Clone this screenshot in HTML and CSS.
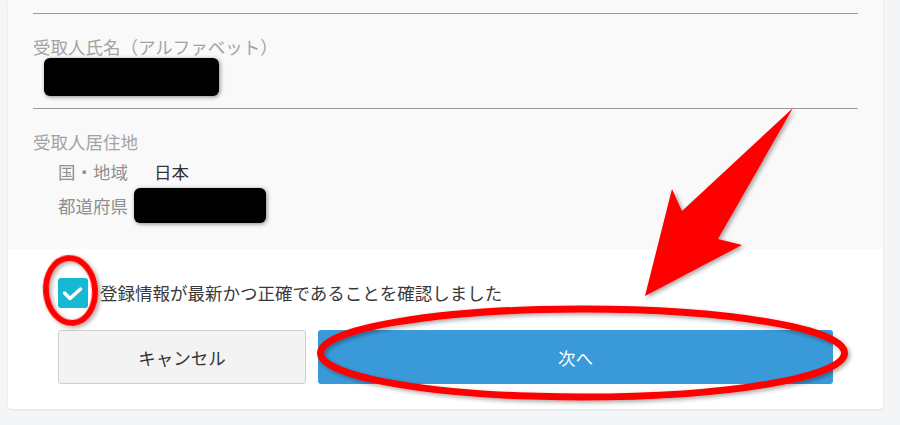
FILE: index.html
```html
<!DOCTYPE html>
<html lang="ja">
<head>
<meta charset="utf-8">
<title>確認</title>
<link rel="stylesheet" href="styles.css">
</head>
<body>
<div class="card">
  <div class="info">
    <div class="field">
      <div class="label">受取人氏名（アルファベット）</div>
      <div class="redact redact-name"></div>
    </div>
    <div class="field field-last">
      <div class="label">受取人居住地</div>
      <div class="row">
        <span class="key">国・地域</span><span class="val val-country">日本</span>
      </div>
      <div class="row row-pref">
        <span class="key">都道府県</span><span class="redact redact-pref"></span>
      </div>
    </div>
  </div>
  <div class="actions">
    <label class="check">
      <span class="box">
        <svg viewBox="0 0 30 30" width="30" height="30"><path d="M6.5 15 L12 20.5 L22.5 11" fill="none" stroke="#fff" stroke-width="3.5" stroke-linecap="round" stroke-linejoin="round"/></svg>
      </span>
      <span class="check-text">登録情報が最新かつ正確であることを確認しました</span>
    </label>
    <div class="buttons">
      <button class="btn btn-cancel">キャンセル</button>
      <button class="btn btn-next">次へ</button>
    </div>
  </div>
</div>
<svg class="overlay" width="900" height="425" viewBox="0 0 900 425">
  <defs>
    <filter id="sh" x="-20%" y="-20%" width="140%" height="140%">
      <feDropShadow dx="2" dy="2" stdDeviation="2" flood-color="#000" flood-opacity="0.35"/>
    </filter>
  </defs>
  <ellipse cx="70.5" cy="290.5" rx="24.5" ry="32.5" transform="rotate(-5 70.5 290.5)" fill="none" stroke="#ff0000" stroke-width="6" filter="url(#sh)"/>
  <ellipse cx="582.5" cy="353" rx="262" ry="44" fill="none" stroke="#ff0000" stroke-width="7" filter="url(#sh)"/>
  <polygon points="793,108 718,239 742,245 645,296 672,189 682,211" fill="#ff0000" filter="url(#sh)"/>
</svg>
</body>
</html>
```

FILE: styles.css
```css
* { box-sizing: border-box; }
html, body {
  margin: 0;
  padding: 0;
  background: #f4f5f7;
  width: 900px;
  height: 425px;
  overflow: hidden;
  font-family: "Noto Sans CJK JP", "Noto Sans", sans-serif;
  font-size: 17.5px;
  color: #333;
}
.card {
  margin-left: 8px;
  width: 875px;
  background: #fff;
  border-radius: 0 0 4px 4px;
  box-shadow: 0 1px 3px rgba(0,0,0,0.08);
}
.info {
  background: #f9f9f9;
  padding: 13px 25px 26px;
}
.field {
  border-top: 1px solid #9a9a9a;
  padding-top: 21px;
  padding-bottom: 12px;
}
.field-last { padding-bottom: 0; }
.label {
  color: #a3a3a3;
  line-height: 24px;
  height: 24px;
}
.redact {
  display: block;
  background: #000;
  border-radius: 6px;
  box-shadow: 1px 1px 4px rgba(0,0,0,0.45);
}
.redact-name {
  margin-top: -1px;
  margin-left: 11px;
  width: 175px;
  height: 38px;
}
.row {
  display: flex;
  align-items: center;
  padding-left: 25px;
  margin-top: 6px;
  line-height: 24px;
}
.row-pref { margin-top: 4px; }
.key { color: #8f8f8f; }
.val-country { margin-left: 26px; color: #333; }
.redact-pref {
  margin-left: 6px;
  width: 132px;
  height: 35px;
}
.actions {
  padding: 29px 50px 25px;
}
.check {
  display: flex;
  align-items: center;
  gap: 12px;
}
.box {
  width: 30px;
  height: 30px;
  border-radius: 3px;
  background: #17b8d3;
  display: block;
}
.box svg { display: block; }
.check-text { color: #3a3a3a; line-height: 30px; }
.buttons {
  display: flex;
  gap: 12px;
  margin-top: 22px;
}
.btn {
  font-family: inherit;
  font-size: 17.5px;
  height: 54px;
  border-radius: 3px;
  padding: 0;
  margin: 0;
}
.btn-cancel {
  width: 248px;
  background: #f3f3f3;
  border: 1px solid #cfcfcf;
  color: #333;
}
.btn-next {
  flex: 1;
  background: #3a9ad9;
  border: none;
  color: #fff;
}
.overlay {
  position: absolute;
  left: 0;
  top: 0;
  pointer-events: none;
}
```
